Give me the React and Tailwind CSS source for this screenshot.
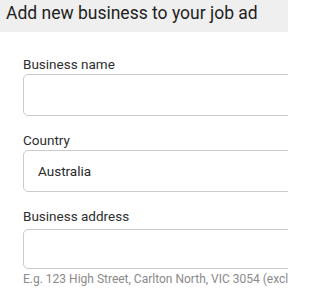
function Field({ label, value, helper, boxClass = "mt-[2px] h-[42px]" }) {
  return (
    <div className="flex flex-col">
      <label className="text-[13.5px] leading-[16px] text-[#2e2e2e]">{label}</label>
      <div
        className={`${boxClass} w-[300px] shrink-0 rounded-[5px] border border-[#cbcbcb] bg-white flex items-center px-[14px] text-[13.5px] text-[#2a2a2a]`}
      >
        {value}
      </div>
      {helper && (
        <p className="mt-[3px] whitespace-nowrap text-[12px] leading-[14px] text-[#8a8a8a]">
          {helper}
        </p>
      )}
    </div>
  );
}

export default function App() {
  return (
    <div
      className="h-[288px] w-[288px] overflow-hidden bg-white"
      style={{ fontFamily: "Roboto, 'Liberation Sans', sans-serif" }}
    >
      <div className="h-[32px] bg-[#efefef] pl-[6px] pt-[1px]">
        <h1 className="whitespace-nowrap text-[17.5px] leading-[24px] text-[#1e1e1e]">
          Add new business to your job ad
        </h1>
      </div>
      <div className="flex flex-col gap-[16px] pl-[23px] pt-[24px]">
        <Field label="Business name" />
        <Field label="Country" value="Australia" />
        <Field
          label="Business address"
          boxClass="mt-[5px] h-[40px]"
          helper="E.g. 123 High Street, Carlton North, VIC 3054 (exclude unit/level)"
        />
      </div>
    </div>
  );
}
